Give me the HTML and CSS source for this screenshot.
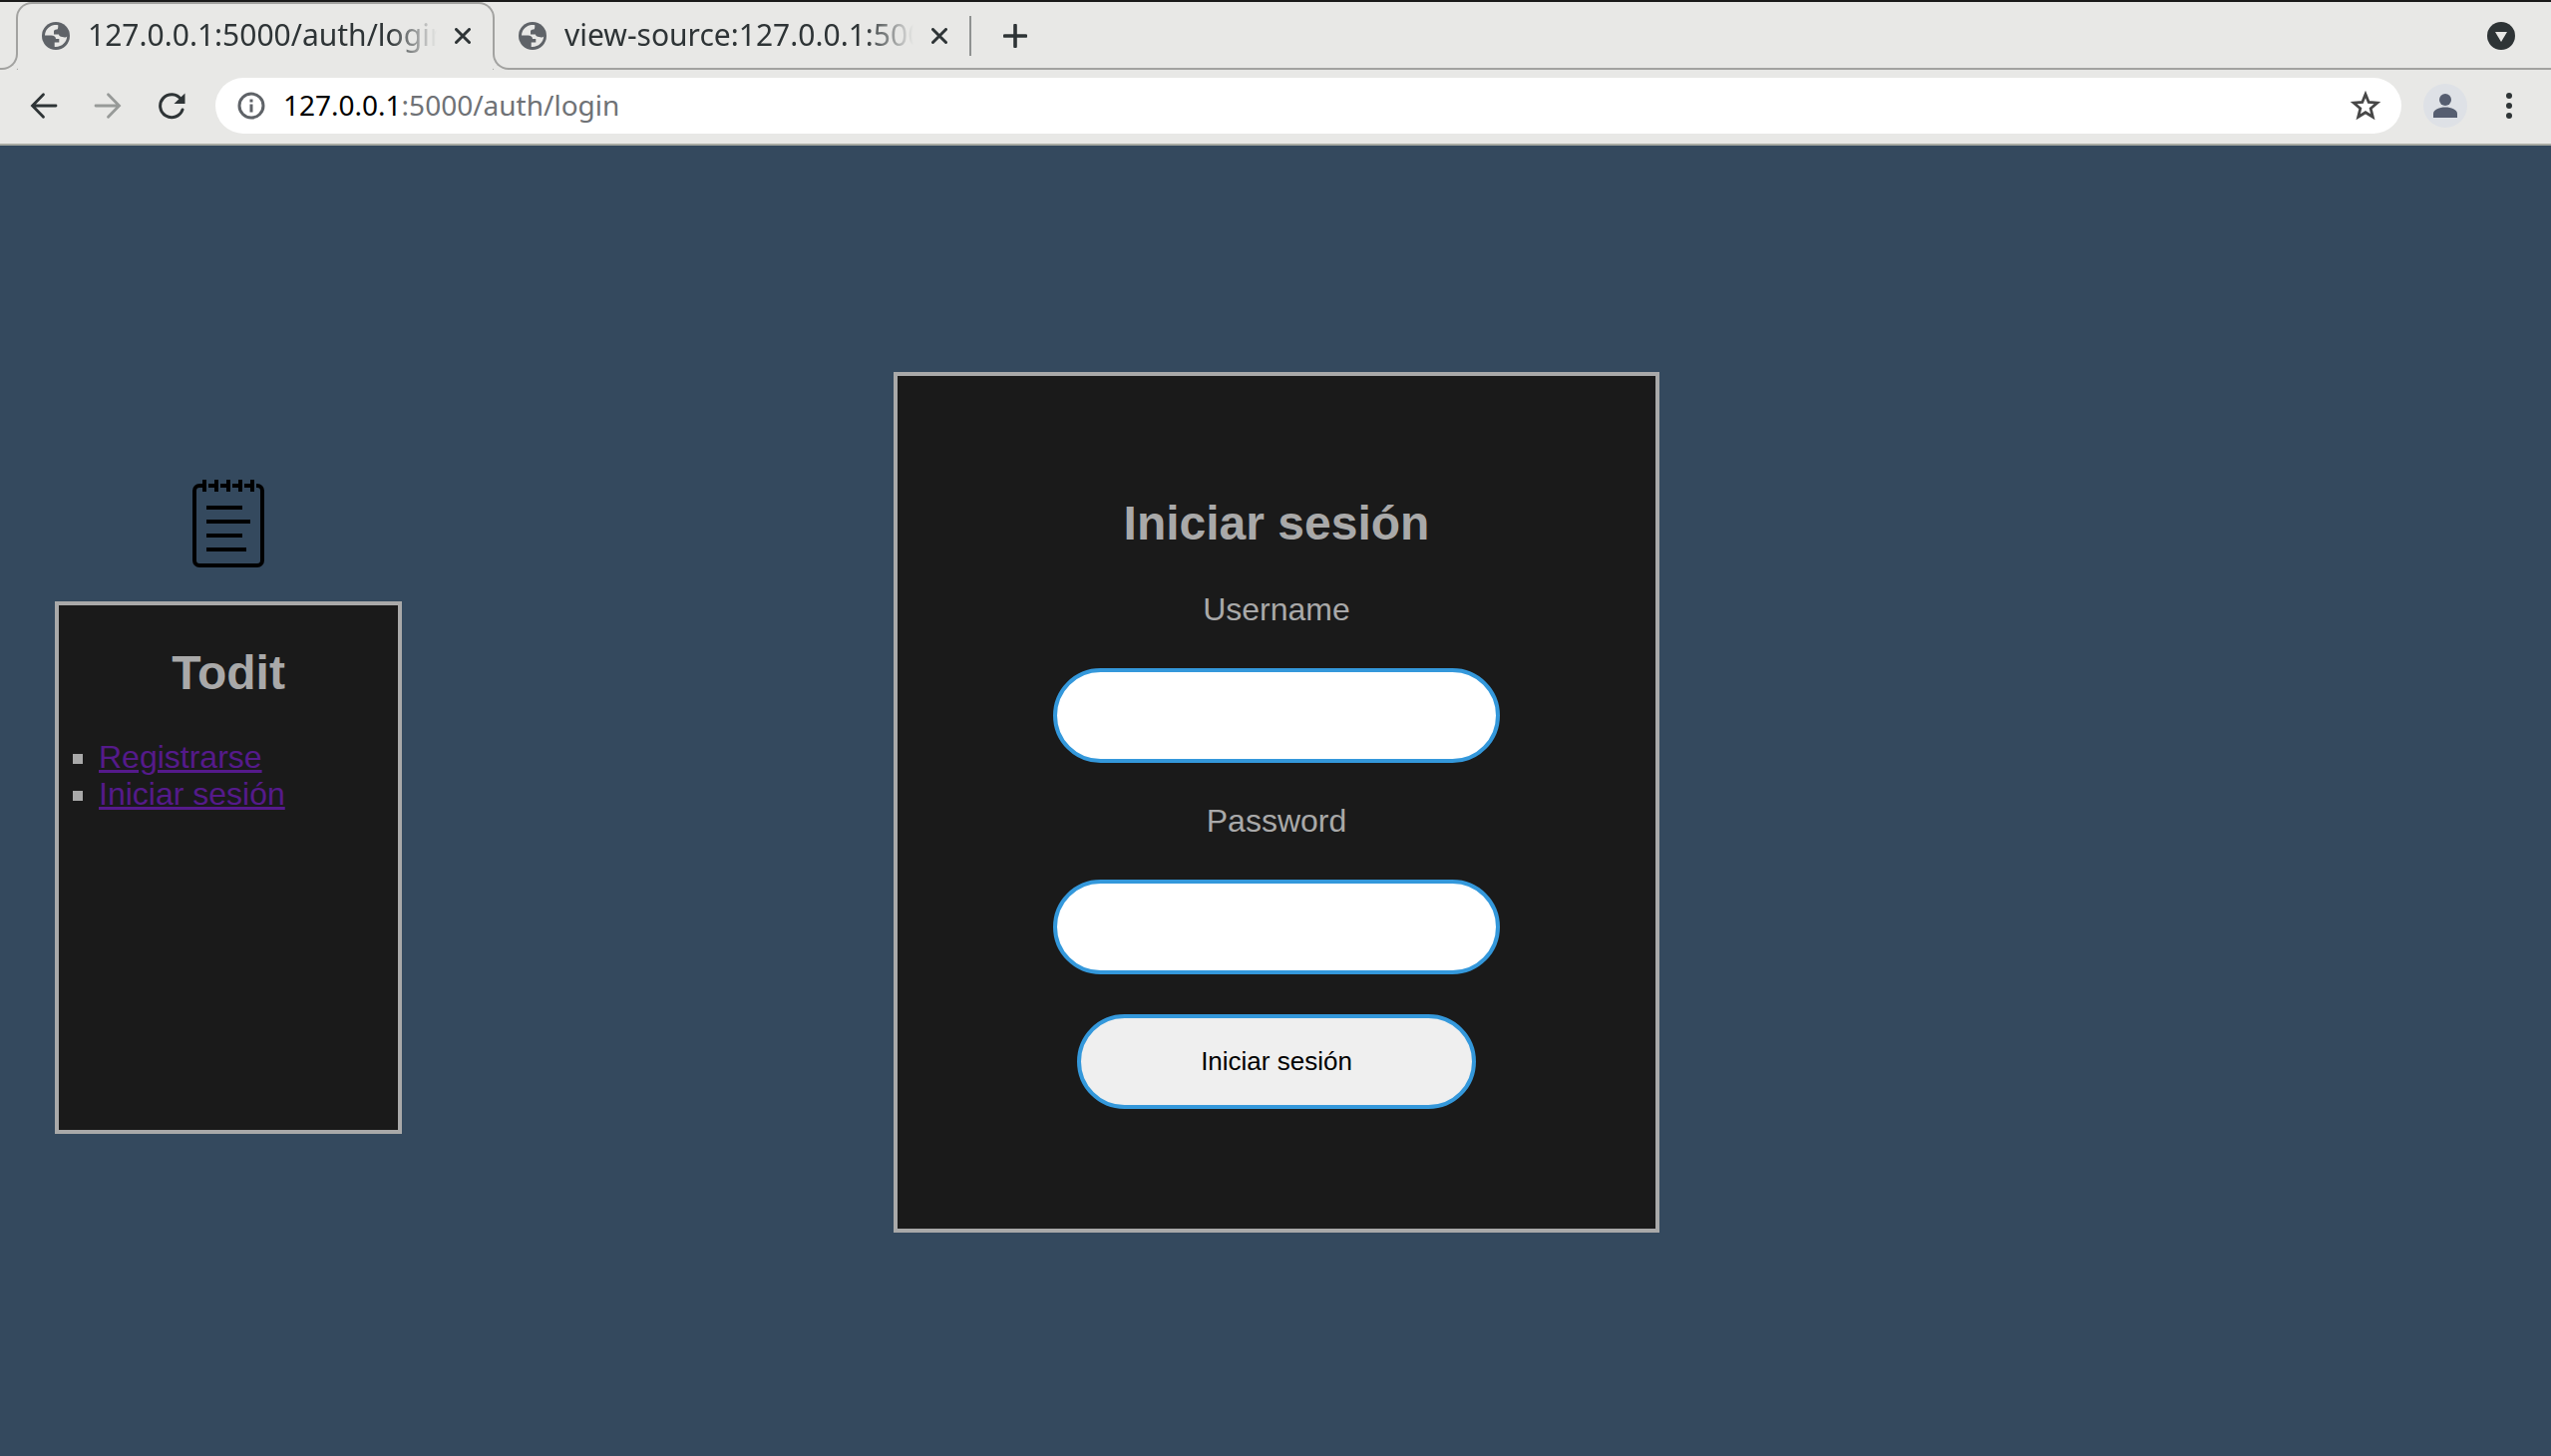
FILE: index.html
```html
<!DOCTYPE html>
<html lang="es">
<head>
<meta charset="utf-8">
<title>127.0.0.1:5000/auth/login</title>
<link rel="stylesheet" href="styles.css">
</head>
<body>
<svg class="defs" aria-hidden="true">
  <symbol id="globe" viewBox="0 0 28 28">
    <circle cx="14" cy="14" r="14" fill="#5f6368"/>
    <path fill="#e8e8e6" d="M16.300 3.200C15 3 13 2.900 11.500 3.300C6.500 4.500 3.300 8.500 3 13.500H9.500C12 13.500 14 15 14 17H17.300V20.500H12.700V24.900C19.500 25.500 25 20.500 25.200 14.500C24 16 22 15.500 20.500 15C18.500 15 17 14 17 12.500H12V9.500C12 8 13.500 7.300 15.300 7.500C16.300 7 16.300 5 16.300 3.200Z"/>
  </symbol>
  <symbol id="close" viewBox="0 0 16 16">
    <path d="M1.500 1.500l13 13M14.500 1.500l-13 13" fill="none" stroke="#2e3436" stroke-width="3" stroke-linecap="round"/>
  </symbol>
</svg>

<header class="browser">
  <div class="tabstrip">
    <div class="tab tab-active">
      <svg class="icon-28"><use href="#globe"/></svg>
      <span class="tab-title">127.0.0.1:5000/auth/login</span>
      <button class="bare" aria-label="Cerrar"><svg class="icon-16"><use href="#close"/></svg></button>
    </div>
    <div class="tab">
      <svg class="icon-28"><use href="#globe"/></svg>
      <span class="tab-title">view-source:127.0.0.1:5000</span>
      <button class="bare" aria-label="Cerrar"><svg class="icon-16"><use href="#close"/></svg></button>
    </div>
    <span class="divider"></span>
    <button class="bare new-tab" aria-label="Nueva pestaña">
      <svg class="icon-24" viewBox="0 0 24 24"><path d="M12 1.500v21M1.500 12h21" fill="none" stroke="#2e3436" stroke-width="3.600" stroke-linecap="round"/></svg>
    </button>
    <button class="bare tab-search" aria-label="Buscar pestañas">
      <svg class="icon-28" viewBox="0 0 28 28"><circle cx="14" cy="14" r="14" fill="#2e3436"/><path d="M8 10h12l-6 10z" fill="#e8e8e6"/></svg>
    </button>
  </div>
  <div class="toolbar">
    <button class="bare" aria-label="Atrás">
      <svg class="icon-28" viewBox="0 0 28 28"><path d="M26 14H3M13.500 2.800L2.500 14l11 11.200" fill="none" stroke="#2e3436" stroke-width="2.800" stroke-linecap="round"/></svg>
    </button>
    <button class="bare" aria-label="Adelante">
      <svg class="icon-28" viewBox="0 0 28 28"><path d="M2 14h23M14.500 2.800L25.500 14l-11 11.200" fill="none" stroke="#979a98" stroke-width="2.800" stroke-linecap="round"/></svg>
    </button>
    <button class="bare" aria-label="Recargar">
      <svg class="icon-28" viewBox="0 0 28 28"><path d="M25 18A11.500 11.500 0 1 1 23.500 7.500" fill="none" stroke="#2e3436" stroke-width="3" stroke-linecap="round"/><path d="M27.500 1.500v10.500h-11z" fill="#2e3436"/></svg>
    </button>
    <div class="address">
      <svg class="icon-28" viewBox="0 0 28 28"><circle cx="14" cy="14" r="12" fill="none" stroke="#5f6368" stroke-width="3"/><path d="M12.500 7.500h3v3h-3zM12.500 12.500h3v8h-3z" fill="#5f6368"/></svg>
      <span class="url"><span class="host">127.0.0.1</span>:5000/auth/login</span>
      <button class="bare" aria-label="Marcador">
        <svg class="icon-32" viewBox="0 0 32 32"><path d="M16 4.500l3.200 8 8.600.7-6.600 5.600 2.100 8.500L16 22.700l-7.300 4.600 2.100-8.500-6.600-5.600 8.600-.7z" fill="none" stroke="#474747" stroke-width="2.800"/></svg>
      </button>
    </div>
    <button class="bare profile" aria-label="Perfil">
      <svg class="icon-44" viewBox="0 0 44 44"><circle cx="22" cy="22" r="22" fill="#dee1e6"/><circle cx="22" cy="16" r="6" fill="#565e70"/><path d="M10 34v-4c0-4 6-6.500 12-6.500S34 26 34 30v4z" fill="#565e70"/></svg>
    </button>
    <button class="bare" aria-label="Menú">
      <svg class="icon-28" viewBox="0 0 28 28"><g fill="#2e3436"><circle cx="14" cy="4" r="3"/><circle cx="14" cy="14" r="3"/><circle cx="14" cy="24" r="3"/></g></svg>
    </button>
  </div>
</header>

<div class="page">
  <aside class="sidebar">
    <svg class="logo" viewBox="0 0 72 88" fill="none" stroke="#000" stroke-width="4">
      <path d="M12 6H7a5 5 0 0 0-5 5v70a5 5 0 0 0 5 5h58a5 5 0 0 0 5-5V11a5 5 0 0 0-5-5h-1"/>
      <path d="M16 6h8M28 6h8M40 6h8M52 6h8"/>
      <path d="M12 0v12M24 0v12M36 0v12M48 0v12M60 0v12"/>
      <path d="M14 28h36M14 42h44M14 56h36M14 70h40"/>
    </svg>
    <nav class="panel menu">
      <h2>Todit</h2>
      <ul>
        <li><a href="#registrarse">Registrarse</a></li>
        <li><a href="#login">Iniciar sesión</a></li>
      </ul>
    </nav>
  </aside>
  <main>
    <form class="panel login">
      <h2>Iniciar sesión</h2>
      <label for="username">Username</label>
      <input type="text" id="username" name="username">
      <label for="password">Password</label>
      <input type="password" id="password" name="password">
      <button class="submit" type="button">Iniciar sesión</button>
    </form>
  </main>
</div>
</body>
</html>
```
FILE: styles.css
```css
* {
  box-sizing: border-box;
}

body {
  margin: 0;
  min-height: 100vh;
  display: flex;
  flex-direction: column;
  background: #34495e;
  font-family: "Liberation Sans", Arial, sans-serif;
}

svg {
  display: block;
  flex: none;
}

.defs {
  position: absolute;
  width: 0;
  height: 0;
}

.icon-16 { width: 16px; height: 16px; }
.icon-24 { width: 24px; height: 24px; }
.icon-28 { width: 28px; height: 28px; }
.icon-32 { width: 32px; height: 32px; }
.icon-44 { width: 44px; height: 44px; }

.bare {
  border: 0;
  padding: 0;
  background: none;
}

/* Browser chrome */
.browser {
  background: #e8e8e6;
  border-top: 2px solid #1a1a1a;
  border-bottom: 2px solid #a7aaa3;
  font-family: "Noto Sans", sans-serif;
}

.tabstrip {
  display: flex;
  align-items: center;
  height: 68px;
  padding: 0 36px 0 16px;
  box-shadow: inset 0 -2px #a2a2a0;
}

.tab {
  display: flex;
  align-items: center;
  width: 476px;
  height: 68px;
  padding: 0 22px 0 24px;
}

.tab-active {
  position: relative;
  width: 480px;
  padding-bottom: 2px;
  background: #e8e8e6;
  border: 2px solid #a2a2a0;
  border-bottom: 0;
  border-radius: 16px 16px 0 0;
}

/* Outward curves at the foot of the active tab */
.tab-active::before,
.tab-active::after {
  content: "";
  position: absolute;
  bottom: 0;
  width: 18px;
  height: 18px;
  border: 2px solid #a2a2a0;
  border-top: 0;
  background: #e8e8e6;
}

.tab-active::before {
  right: 100%;
  border-left: 0;
  border-bottom-right-radius: 16px;
  box-shadow: 4px 4px #e8e8e6;
}

.tab-active::after {
  left: 100%;
  border-right: 0;
  border-bottom-left-radius: 16px;
  box-shadow: -4px 4px #e8e8e6;
}

.tab-title {
  flex: 1;
  min-width: 0;
  margin: 0 18px;
  padding-bottom: 2px;
  overflow: hidden;
  white-space: nowrap;
  font-size: 30px;
  line-height: 40px;
  color: #2e3436;
  -webkit-mask-image: linear-gradient(to left, transparent, #000 48px);
  mask-image: linear-gradient(to left, transparent, #000 48px);
}

.divider {
  width: 2px;
  height: 40px;
  background: #8f9291;
}

.new-tab {
  margin-left: 32px;
}

.tab-search {
  margin-left: auto;
}

.toolbar {
  display: flex;
  align-items: center;
  gap: 36px;
  height: 74px;
  padding: 0 28px 2px 30px;
}

.address {
  flex: 1;
  display: flex;
  align-items: center;
  height: 56px;
  margin-left: -6px;
  padding: 0 20px 0 22px;
  background: #fff;
  border-radius: 28px;
}

.url {
  flex: 1;
  margin-left: 18px;
  padding-bottom: 2px;
  font-size: 28px;
  line-height: 40px;
  color: #6f7276;
}

.host {
  color: #000;
}

.profile {
  margin: 0 -8px 0 -14px;
}

/* Page */
.page {
  flex: 1;
  display: grid;
  grid-template-columns: 18% 1fr 18%;
  align-items: center;
  padding-top: 2px;
}

.panel {
  background: #1a1a1a;
  border: 4px solid #a9a9a9;
  color: #a9a9a9;
  font-size: 32px;
  line-height: 37px;
}

h2 {
  margin: 0;
  text-align: center;
  font-size: 48px;
  line-height: 56px;
}

.sidebar {
  display: flex;
  flex-direction: column;
  align-items: center;
  gap: 34px;
  width: 348px;
  margin-left: 55px;
  padding-top: 10px;
}

.logo {
  width: 72px;
  height: 88px;
}

.menu {
  width: 100%;
  min-height: 534px;
  padding: 40px 0;
}

.menu ul {
  margin: 38px 0 0;
  padding-left: 40px;
  list-style: square;
}

.menu a {
  color: #551a8b;
}

main {
  display: flex;
  justify-content: center;
  padding-left: 2px;
}

.login {
  display: flex;
  flex-direction: column;
  align-items: center;
  width: 768px;
  padding: 120px 0;
}

.login label {
  margin-top: 40px;
}

.login input,
.submit {
  height: 95px;
  margin-top: 40px;
  border: 4px solid #3498db;
  border-radius: 48px;
  font-family: inherit;
  font-size: 26px;
  text-align: center;
}

.login input {
  width: 448px;
  background: #fff;
}

.submit {
  width: 400px;
  padding: 0;
  background: #efefef;
  color: #000;
}
```
